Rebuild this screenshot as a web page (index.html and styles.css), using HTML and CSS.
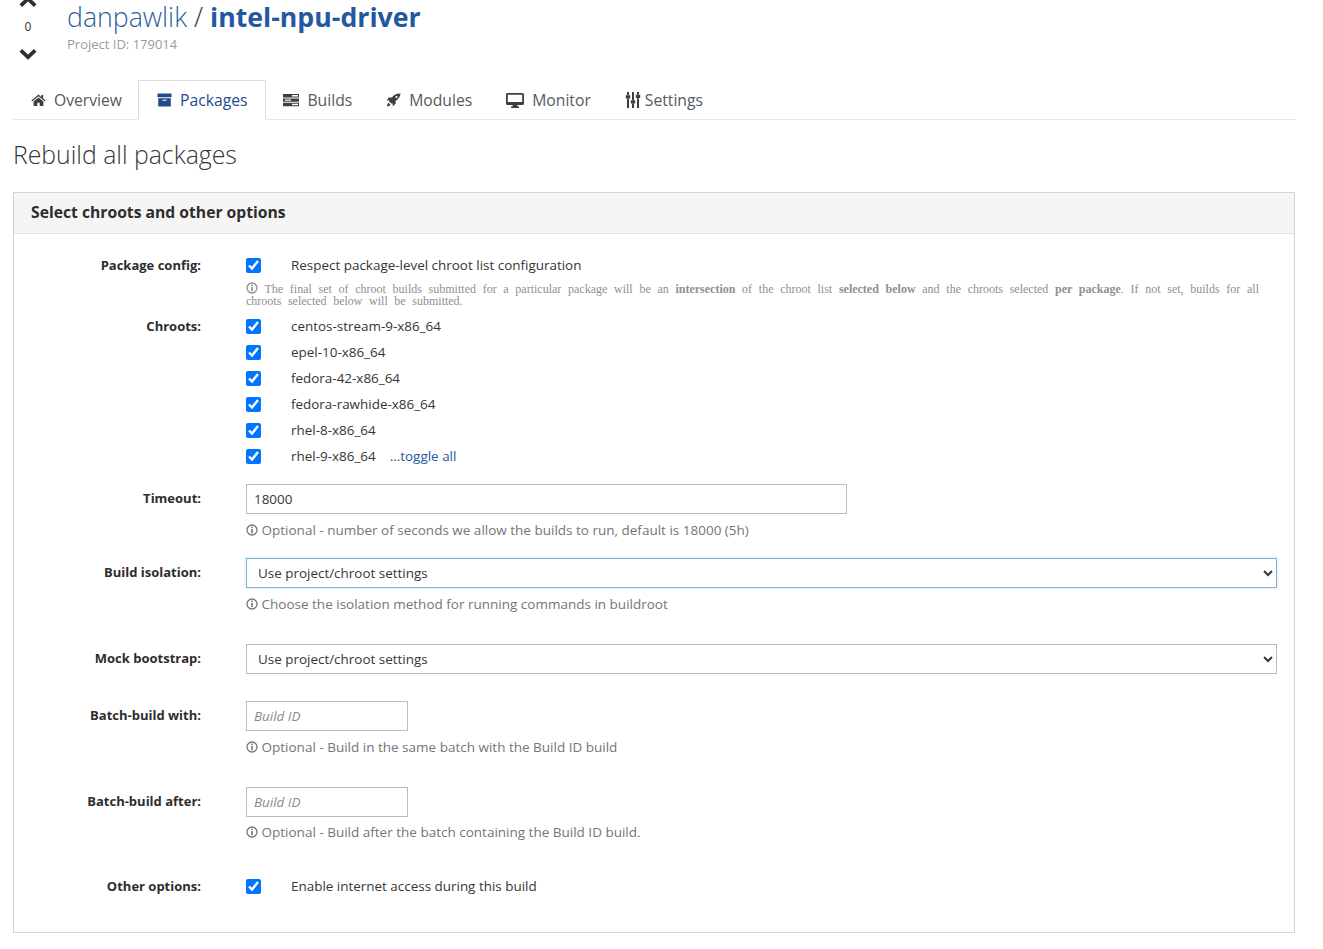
FILE: index.html

```html
<!DOCTYPE html>
<html lang="en">
<head>
  <meta charset="UTF-8" />
  <title>Rebuild all packages</title>
  <link rel="stylesheet" href="styles.css">
</head>
<body>
  <svg class="icon-defs" width="0" height="0">
    <symbol id="info" viewBox="0 0 12 12">
      <circle cx="6" cy="6" r="5" fill="none" stroke="currentColor" stroke-width="1.3"/>
      <rect x="5.2" y="2.6" width="1.6" height="1.6" fill="currentColor"/>
      <rect x="5.2" y="5" width="1.6" height="4.200" fill="currentColor"/>
    </symbol>
  </svg>

  <header class="project-head">
    <div class="votes">
      <svg class="chevron" viewBox="0 0 16 10"><path d="M2 8l6-5.6L14 8" fill="none" stroke="#2b2f33" stroke-width="3.2"/></svg>
      <span class="vote-count">0</span>
      <svg class="chevron" viewBox="0 0 16 10"><path d="M2 2l6 5.6L14 2" fill="none" stroke="#2b2f33" stroke-width="3.2"/></svg>
    </div>
    <div>
      <h1 class="project-title"><a class="owner" href="#">danpawlik</a> <span class="slash">/</span> <a class="name" href="#">intel-npu-driver</a></h1>
      <div class="project-id">Project ID: 179014</div>
    </div>
  </header>

  <nav class="tabs">
    <a class="tab tab-first" href="#">
      <svg class="tab-icon narrow" viewBox="0 0 16 14"><path d="M8 1.2L.4 7.6l.8 1L8 3l6.8 5.6.8-1-2.6-2.2V1.600h-2v2.100zM2.800 8.600V13.400h3.900V9.800h2.600v3.600h3.900V8.600L8 4.300z" fill="currentColor"/></svg>
      Overview
    </a>
    <a class="tab active" href="#">
      <svg class="tab-icon narrow" viewBox="0 0 16 14"><path d="M.5 0h15v4H.5zM1.300 5h13.400v9H1.300zM5.800 6.600v1.300h4.400V6.600z" fill="currentColor" fill-rule="evenodd"/></svg>
      Packages
    </a>
    <a class="tab" href="#">
      <svg class="tab-icon" viewBox="0 0 16 14"><path d="M0 1h16v3.400H0zM0 5.400h16v3.400H0zM0 9.800h16v3.400H0zM9 2v1.400h6V2zM2 6.400v1.400h6V6.400zM9 10.800v1.400h6v-1.400z" fill="currentColor" fill-rule="evenodd"/></svg>
      Builds
    </a>
    <a class="tab" href="#">
      <svg class="tab-icon narrow" viewBox="0 0 16 14"><path d="M15.500 0c-4-.2-7 1.200-9.200 4.300H3L.6 7.200h3L3 8.300l3.200 2.800.9-.7v3.200L10.200 11V8c3-2.300 5-4.500 5.300-8zM11.200 2.700a1.200 1.200 0 1 1 0 2.400 1.200 1.200 0 0 1 0-2.400zM2.800 10c-1 .7-1.600 2-1.800 3.800 1.800-.2 3.100-.8 3.800-1.800z" fill="currentColor" fill-rule="evenodd"/></svg>
      Modules
    </a>
    <a class="tab" href="#">
      <svg class="tab-icon wide" viewBox="0 0 18 15"><path d="M1.500 0h15A1.500 1.500 0 0 1 18 1.500v9a1.500 1.500 0 0 1-1.500 1.500H11.200l.4 1.500h1.400V15H5v-1.500h1.400l.4-1.500H1.500A1.500 1.500 0 0 1 0 10.500v-9A1.500 1.500 0 0 1 1.500 0zM1.800 1.800v7.200h14.400V1.800z" fill="currentColor" fill-rule="evenodd"/></svg>
      Monitor
    </a>
    <a class="tab tab-tight" href="#">
      <svg class="tab-icon" viewBox="0 0 16 16"><path d="M2 0h2v3H2zM.8 3.200h4.400v3.400H.8zM2 6.800h2V16H2zM7 0h2v8H7zM5.800 8.200h4.400v3.400H5.800zM7 11.800h2V16H7zM12 0h2v2.500h-2zM10.800 2.700h4.400v3.400h-4.400zM12 6.300h2V16h-2z" fill="currentColor"/></svg>
      Settings
    </a>
  </nav>

  <h2 class="page-title">Rebuild all packages</h2>

  <form class="panel">
    <div class="panel-heading">Select chroots and other options</div>
    <div class="panel-body">
      <div class="row row-config">
        <div class="row-label">Package config:</div>
        <div class="row-field">
          <label class="check"><input type="checkbox" checked> Respect package-level chroot list configuration</label>
          <p class="help-serif"><svg class="info"><use href="#info"/></svg> The final set of chroot builds submitted for a particular package will be an <b>intersection</b> of the chroot list <b>selected below</b> and the chroots selected <b>per package</b>. If not set, builds for all chroots selected below will be submitted.</p>
        </div>
      </div>

      <div class="row row-chroots">
        <div class="row-label">Chroots:</div>
        <div class="row-field">
          <label class="check"><input type="checkbox" checked> centos-stream-9-x86_64</label>
          <label class="check"><input type="checkbox" checked> epel-10-x86_64</label>
          <label class="check"><input type="checkbox" checked> fedora-42-x86_64</label>
          <label class="check"><input type="checkbox" checked> fedora-rawhide-x86_64</label>
          <label class="check"><input type="checkbox" checked> rhel-8-x86_64</label>
          <div class="check-line">
            <label class="check"><input type="checkbox" checked> rhel-9-x86_64</label>
            <a class="toggle-all" href="#">...toggle all</a>
          </div>
        </div>
      </div>

      <div class="row row-timeout">
        <div class="row-label row-label-input">Timeout:</div>
        <div class="row-field">
          <input class="text-input timeout" type="text" value="18000">
          <p class="help"><svg class="info"><use href="#info"/></svg> Optional - number of seconds we allow the builds to run, default is 18000 (5h)</p>
        </div>
      </div>

      <div class="row row-isolation">
        <div class="row-label row-label-input">Build isolation:</div>
        <div class="row-field">
          <select class="select focused"><option>Use project/chroot settings</option></select>
          <p class="help"><svg class="info"><use href="#info"/></svg> Choose the isolation method for running commands in buildroot</p>
        </div>
      </div>

      <div class="row row-bootstrap">
        <div class="row-label row-label-input">Mock bootstrap:</div>
        <div class="row-field">
          <select class="select"><option>Use project/chroot settings</option></select>
        </div>
      </div>

      <div class="row row-batch">
        <div class="row-label row-label-input">Batch-build with:</div>
        <div class="row-field">
          <input class="text-input build-id" type="text" placeholder="Build ID">
          <p class="help"><svg class="info"><use href="#info"/></svg> Optional - Build in the same batch with the Build ID build</p>
        </div>
      </div>

      <div class="row row-after">
        <div class="row-label row-label-input">Batch-build after:</div>
        <div class="row-field">
          <input class="text-input build-id" type="text" placeholder="Build ID">
          <p class="help"><svg class="info"><use href="#info"/></svg> Optional - Build after the batch containing the Build ID build.</p>
        </div>
      </div>

      <div class="row">
        <div class="row-label">Other options:</div>
        <div class="row-field">
          <label class="check"><input type="checkbox" checked> Enable internet access during this build</label>
        </div>
      </div>
    </div>
  </form>
</body>
</html>
```

FILE: styles.css

```css
html, body {
  overflow: hidden;
}
body {
  font-family: 'Open Sans', sans-serif;
  font-size: 13.44px;
  color: #363636;
  background-color: #fff;
  margin: 0;
  padding: 0 28px 0 13px;
  height: 949px;
  box-sizing: border-box;
}
a {
  text-decoration: none;
}
.icon-defs {
  position: absolute;
}

/* project header, page is scrolled a little so the top is cut */
.project-head {
  display: flex;
  gap: 24px;
  height: 83px;
  margin-top: -4px;
}
.votes {
  width: 30px;
  display: flex;
  flex-direction: column;
  align-items: center;
  flex-shrink: 0;
}
.chevron {
  width: 20px;
  height: 12px;
  flex-shrink: 0;
}
.vote-count {
  font-size: 12px;
  line-height: 16px;
  color: #333;
  margin-top: 11px;
  margin-bottom: 13px;
}
.project-title {
  font-size: 26.7px;
  font-weight: 400;
  line-height: 38px;
  margin: 2px 0 0;
}
.owner {
  color: #2e5f9e;
  font-weight: 300;
}
.slash {
  color: #363636;
  font-weight: 300;
}
.name {
  color: #22589e;
  font-weight: 700;
}
.project-id {
  font-size: 13px;
  line-height: 16px;
  color: #9c9c9c;
}

/* tabs */
.tabs {
  display: flex;
  height: 40px;
  border-bottom: 1px solid #e6e6e6;
}
.tab {
  display: flex;
  align-items: center;
  gap: 8px;
  padding: 0 16px 1px;
  margin-top: 1px;
  margin-bottom: -1px;
  border: 1px solid transparent;
  border-bottom: none;
  font-size: 15.7px;
  color: #555b60;
}
.tab-first {
  padding-left: 17px;
  margin-right: -1px;
}
.tab.active {
  color: #1f4b8a;
  background-color: #fff;
  padding-left: 18px;
  padding-right: 18px;
  border-color: #dcdcdc;
  border-bottom: 1px solid #fff;
}
.tab-tight {
  gap: 4px;
}
.tab-icon {
  width: 16px;
  height: 14px;
  color: #3a3f44;
}
.tab-icon.narrow {
  width: 15px;
}
.tab-icon.wide {
  width: 18px;
  height: 15px;
}
.tab.active .tab-icon {
  color: #1f4b8a;
}
.tab-tight .tab-icon {
  height: 16px;
}

.page-title {
  font-size: 24.8px;
  font-weight: 300;
  line-height: 36px;
  color: #363636;
  margin: 16px 0 20px;
}

/* panel */
.panel {
  border: 1px solid #d5d5d5;
  height: 741px;
  box-sizing: border-box;
}
.panel-heading {
  background-color: #f5f5f5;
  border-bottom: 1px solid #e3e3e3;
  font-size: 15.7px;
  font-weight: 700;
  color: #2d2d2d;
  height: 40px;
  line-height: 38px;
  padding-left: 17px;
}
.panel-body {
  padding-top: 18px;
}
.row {
  display: flex;
}
.row-label {
  width: 187px;
  flex-shrink: 0;
  margin-right: 45px;
  text-align: right;
  font-size: 13px;
  font-weight: 700;
  line-height: 26px;
  color: #2d2d2d;
}
.row-label-input {
  line-height: 29px;
}
.row-field {
  flex: 1;
  min-width: 0;
  padding-right: 17px;
}

/* checkboxes */
.check {
  display: flex;
  align-items: center;
  height: 26px;
  line-height: 26px;
}
.check input {
  width: 15px;
  height: 15px;
  margin: 0 30px 0 0;
  accent-color: #0075ff;
}
.check-line {
  display: flex;
  align-items: center;
  gap: 14px;
}
.toggle-all {
  color: #22589e;
}

/* inputs */
.text-input {
  display: block;
  box-sizing: border-box;
  height: 30px;
  border: 1px solid #bbb;
  padding: 0 7px;
  font-family: 'Open Sans', sans-serif;
  font-size: 13.44px;
  color: #363636;
}
.text-input::placeholder {
  color: #8b8b8b;
  font-style: italic;
}
.timeout {
  width: 601px;
}
.build-id {
  width: 162px;
}
.select {
  display: block;
  box-sizing: border-box;
  width: 100%;
  height: 30px;
  border: 1px solid #bbb;
  border-radius: 0;
  padding: 0 7px;
  background-color: #fff;
  font-family: 'Open Sans', sans-serif;
  font-size: 13.44px;
  color: #363636;
}
.select.focused {
  border-color: #7db4d1;
  box-shadow: 0 0 3px rgba(125, 180, 209, 0.4);
}

/* help texts */
.help {
  margin: 6px 0 0;
  font-size: 13.5px;
  line-height: 20px;
  color: #72767b;
}
.help-serif {
  margin: 4px 18px 0 0;
  font-family: 'Liberation Serif', serif;
  font-size: 12px;
  line-height: 12px;
  word-spacing: 3.6px;
  color: #909090;
  text-align: justify;
}
.info {
  width: 12px;
  height: 12px;
  vertical-align: -1px;
}

/* vertical rhythm of the form */
.row-config {
  margin-bottom: 6px;
}
.row-chroots {
  margin-bottom: 15px;
}
.row-timeout {
  margin-bottom: 18px;
}
.row-isolation {
  margin-bottom: 30px;
}
.row-bootstrap {
  margin-bottom: 27px;
}
.row-batch {
  margin-bottom: 30px;
}
.row-after {
  margin-bottom: 31px;
}
.row-after .help {
  margin-top: 5px;
}
```
